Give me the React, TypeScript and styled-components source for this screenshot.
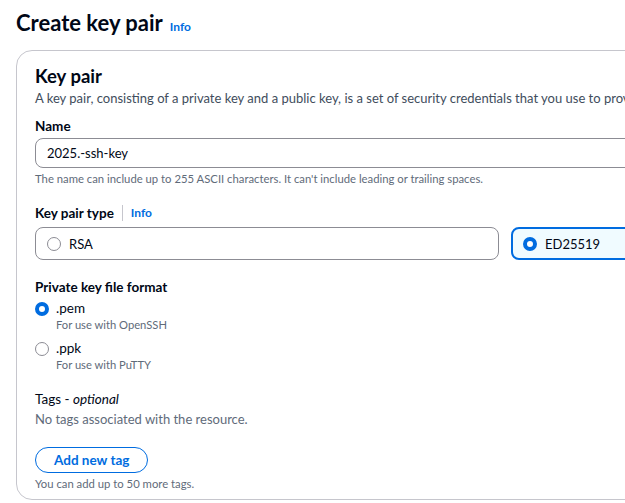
import React, { useState } from 'react';
import styled, { createGlobalStyle } from 'styled-components';

const GlobalStyle = createGlobalStyle`
  html, body {
    margin: 0;
    padding: 0;
    overflow: hidden;
    background: #ffffff;
  }
  body {
    font-family: Lato, "Open Sans", sans-serif;
    color: #000716;
  }
`;

const BLUE = '#006ce0';

const Page = styled.div`
  width: 994px;
  padding: 8px 0 0 16px;
  box-sizing: border-box;
`;

const Header = styled.div`
  display: flex;
  align-items: baseline;
  gap: 7px;
  height: 42px;
`;

const Title = styled.h1`
  margin: 0;
  font-size: 22px;
  font-weight: 700;
  line-height: 30px;
`;

const InfoLink = styled.a`
  color: ${BLUE};
  font-size: 12px;
  font-weight: 700;
  text-decoration: none;
`;

const Card = styled.section`
  border: 1px solid #c6c6cd;
  border-radius: 16px;
  padding: 13px 18px 16px;
  height: 450px;
  box-sizing: border-box;
`;

const CardTitle = styled.h2`
  margin: 0;
  font-size: 18.5px;
  font-weight: 700;
  line-height: 24px;
`;

const Description = styled.p`
  margin: 0 0 8px;
  font-size: 13px;
  line-height: 20px;
  color: #414d5c;
  white-space: nowrap;
`;

const Field = styled.div<{ $gap?: number }>`
  display: flex;
  flex-direction: column;
  margin-bottom: ${(p) => p.$gap ?? 16}px;
`;

const Label = styled.div<{ $space?: number }>`
  display: flex;
  align-items: center;
  font-size: 13.5px;
  font-weight: 700;
  line-height: 20px;
  margin-bottom: ${(p) => p.$space ?? 2}px;
`;

const Divider = styled.span`
  width: 1px;
  height: 16px;
  background: #c6c6cd;
  margin: 0 8px;
`;

const TextInput = styled.input`
  height: 30px;
  box-sizing: border-box;
  border: 1px solid #8c8c94;
  border-radius: 8px;
  padding: 0 11px;
  font-family: inherit;
  font-size: 13px;
  color: #000716;
  outline: none;
`;

const Hint = styled.div`
  font-size: 11.3px;
  line-height: 16px;
  color: #5f6b7a;
  margin-top: 3px;
`;

const Tiles = styled.div`
  display: grid;
  grid-template-columns: 1fr 1fr;
  gap: 12px;
`;

const Tile = styled.label<{ $checked: boolean }>`
  display: flex;
  align-items: center;
  gap: 8px;
  height: 33px;
  box-sizing: border-box;
  padding: 0 ${(p) => (p.$checked ? 10 : 11)}px;
  border: ${(p) => (p.$checked ? `2px solid ${BLUE}` : '1px solid #8c8c94')};
  border-radius: 8px;
  background: ${(p) => (p.$checked ? '#f0fbff' : '#ffffff')};
  font-size: 13px;
  cursor: pointer;
`;

const Radio = styled.span<{ $checked: boolean }>`
  width: 14px;
  height: 14px;
  flex: none;
  box-sizing: border-box;
  border-radius: 50%;
  border: ${(p) => (p.$checked ? `4px solid ${BLUE}` : '1px solid #8c8c94')};
  background: #ffffff;
`;

const OptionList = styled.div`
  display: flex;
  flex-direction: column;
  gap: 6px;
`;

const Option = styled.label`
  display: flex;
  gap: 7px;
  cursor: pointer;
`;

const OptionRadio = styled(Radio)`
  margin-top: 3px;
`;

const OptionText = styled.div`
  display: flex;
  flex-direction: column;
`;

const OptionName = styled.span`
  font-size: 13.5px;
  line-height: 18px;
`;

const OptionSub = styled.span`
  font-size: 11.2px;
  line-height: 16px;
  color: #5f6b7a;
`;

const TagsLabel = styled.div`
  font-size: 13.5px;
  line-height: 20px;
  em {
    font-style: italic;
  }
`;

const Muted = styled.div`
  font-size: 13px;
  line-height: 20px;
  color: #5f6b7a;
  margin-bottom: 18px;
`;

const PillButton = styled.button`
  align-self: flex-start;
  height: 26px;
  padding: 0 18px;
  border: 1px solid ${BLUE};
  border-radius: 20px;
  background: #ffffff;
  color: ${BLUE};
  font-family: inherit;
  font-size: 13.5px;
  font-weight: 700;
  cursor: pointer;
`;

const formats = [
  { id: 'pem', name: '.pem', sub: 'For use with OpenSSH' },
  { id: 'ppk', name: '.ppk', sub: 'For use with PuTTY' },
];

export default function App() {
  const [keyType, setKeyType] = useState('ed25519');
  const [format, setFormat] = useState('pem');

  return (
    <>
      <GlobalStyle />
      <Page>
        <Header>
          <Title>Create key pair</Title>
          <InfoLink href="#">Info</InfoLink>
        </Header>
        <Card>
          <CardTitle>Key pair</CardTitle>
          <Description>
            A key pair, consisting of a private key and a public key, is a set of security credentials that you use to prove your identity when connecting to an instance.
          </Description>

          <Field>
            <Label>Name</Label>
            <TextInput defaultValue="2025.-ssh-key" />
            <Hint>The name can include up to 255 ASCII characters. It can't include leading or trailing spaces.</Hint>
          </Field>

          <Field $gap={17}>
            <Label $space={4}>
              Key pair type
              <Divider />
              <InfoLink href="#">Info</InfoLink>
            </Label>
            <Tiles>
              <Tile $checked={keyType === 'rsa'} onClick={() => setKeyType('rsa')}>
                <Radio $checked={keyType === 'rsa'} />
                RSA
              </Tile>
              <Tile $checked={keyType === 'ed25519'} onClick={() => setKeyType('ed25519')}>
                <Radio $checked={keyType === 'ed25519'} />
                ED25519
              </Tile>
            </Tiles>
          </Field>

          <Field>
            <Label>Private key file format</Label>
            <OptionList>
              {formats.map((f) => (
                <Option key={f.id} onClick={() => setFormat(f.id)}>
                  <OptionRadio $checked={format === f.id} />
                  <OptionText>
                    <OptionName>{f.name}</OptionName>
                    <OptionSub>{f.sub}</OptionSub>
                  </OptionText>
                </Option>
              ))}
            </OptionList>
          </Field>

          <Field $gap={0}>
            <TagsLabel>
              Tags - <em>optional</em>
            </TagsLabel>
            <Muted>No tags associated with the resource.</Muted>
            <PillButton>Add new tag</PillButton>
            <Hint>You can add up to 50 more tags.</Hint>
          </Field>
        </Card>
      </Page>
    </>
  );
}
